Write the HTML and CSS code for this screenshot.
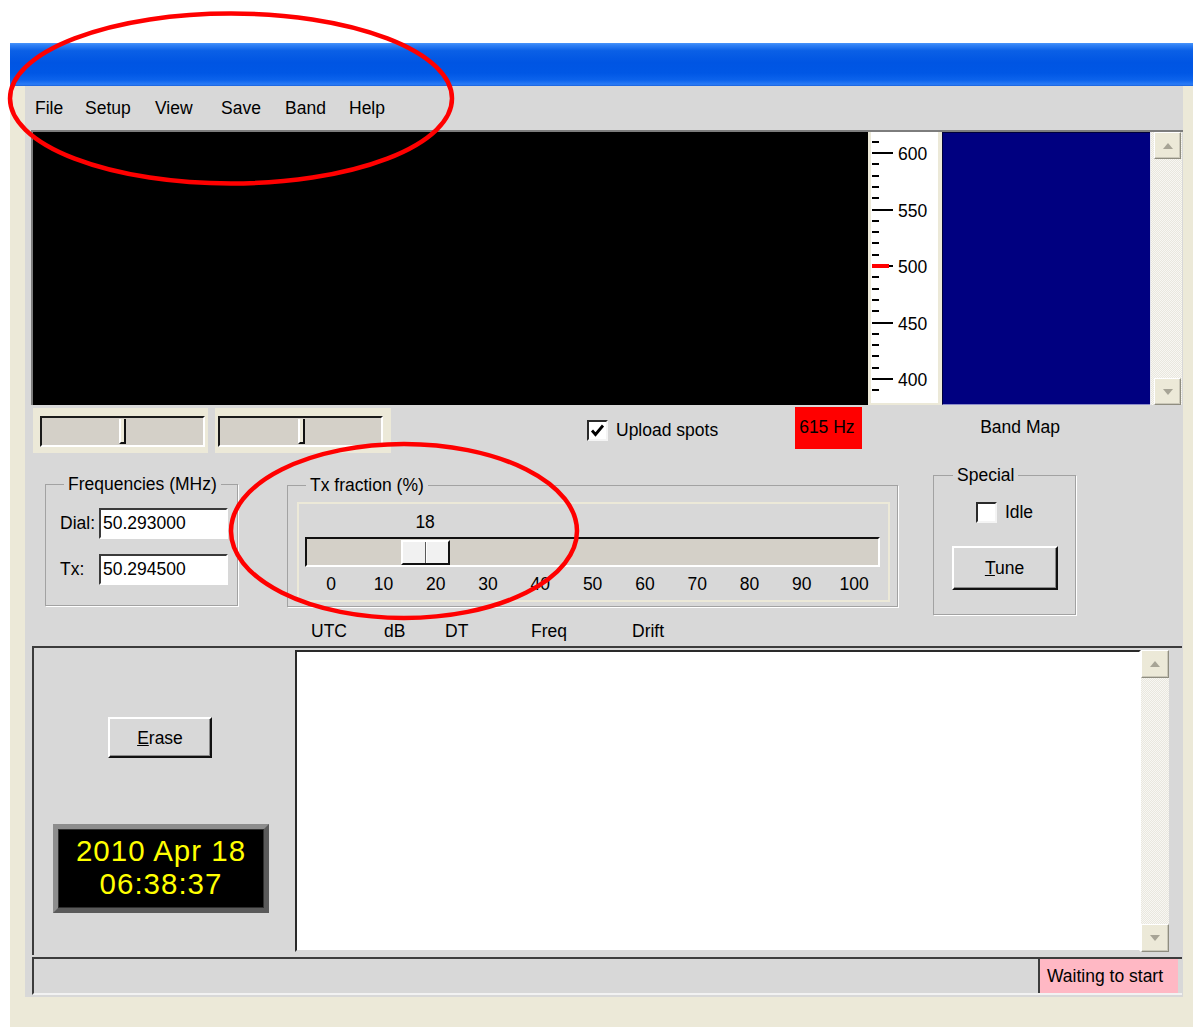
FILE: index.html
```html
<!DOCTYPE html>
<html lang="en">
<head>
<meta charset="utf-8">
<title>WSPR</title>
<link rel="stylesheet" href="styles.css">
</head>
<body>
<div class="screen">
  <div class="window">
    <div class="titlebar"></div>
    <div class="frame">
      <div class="client">

        <nav class="menubar">
          <span>File</span><span>Setup</span><span>View</span><span>Save</span><span>Band</span><span>Help</span>
        </nav>

        <section class="display">
          <div class="waterfall"></div>
          <svg class="ruler" width="74" height="273" viewBox="0 0 74 273">
            <rect width="74" height="273" fill="#ece9d8"/>
            <rect x="3" y="0" width="67" height="271" fill="#fff"/>
            <path d="M4 10h7M4 32h7M4 44h7M4 55h7M4 66h7M4 89h7M4 100h7M4 111h7M4 123h7M4 145h7M4 157h7M4 168h7M4 179h7M4 202h7M4 213h7M4 224h7M4 236h7M4 258h7" stroke="#000" stroke-width="2"/>
            <path d="M4 21h21M4 78h21M4 191h21M4 247h21M21 134h4" stroke="#000" stroke-width="2"/>
            <path d="M4 134h17" stroke="#f00" stroke-width="4"/>
            <g class="ruler-labels">
              <text x="30" y="27.5">600</text>
              <text x="30" y="84.5">550</text>
              <text x="30" y="140.5">500</text>
              <text x="30" y="197.5">450</text>
              <text x="30" y="253.5">400</text>
            </g>
          </svg>
          <div class="bandmap"></div>
          <div class="vscroll">
            <div class="sbtn"><svg width="10" height="6" viewBox="0 0 10 6"><path d="M0 6L5 0L10 6Z" fill="#a7a496"/></svg></div>
            <div class="track"></div>
            <div class="sbtn"><svg width="10" height="6" viewBox="0 0 10 6"><path d="M0 0L5 6L10 0Z" fill="#a7a496"/></svg></div>
          </div>
        </section>

        <section class="controls">
          <div class="mini-slider first">
            <div class="mini-track"><span class="mini-thumb" style="left: 77px"></span></div>
          </div>
          <div class="mini-slider second">
            <div class="mini-track"><span class="mini-thumb" style="left: 78px"></span></div>
          </div>
          <div class="check upload">
            <span class="box"><svg width="17" height="17" viewBox="0 0 17 17"><path d="M3 8.5L6.5 12.5L14 3.5" fill="none" stroke="#000" stroke-width="2.8"/></svg></span>
            <span>Upload spots</span>
          </div>
          <div class="hz">615 Hz</div>
          <div class="bandmap-label">Band Map</div>
        </section>

        <section class="groups">
          <fieldset class="group freq">
            <legend>Frequencies (MHz)</legend>
            <div class="freq-body">
              <span class="lbl">Dial:</span><span class="field">50.293000</span>
              <span class="lbl">Tx:</span><span class="field">50.294500</span>
            </div>
          </fieldset>

          <fieldset class="group txfrac">
            <legend>Tx fraction (%)</legend>
            <div class="slider-panel" style="--v: 18">
              <div class="slider-value">18</div>
              <div class="slider-track"><span class="slider-thumb"></span></div>
              <div class="slider-scale">
                <span>0</span><span>10</span><span>20</span><span>30</span><span>40</span><span>50</span><span>60</span><span>70</span><span>80</span><span>90</span><span>100</span>
              </div>
            </div>
          </fieldset>

          <fieldset class="group special">
            <legend>Special</legend>
            <div class="special-body">
              <div class="check idle">
                <span class="box"></span>
                <span>Idle</span>
              </div>
              <button class="btn tune" type="button"><u>T</u>une</button>
            </div>
          </fieldset>
        </section>

        <div class="headers">
          <span>UTC</span><span>dB</span><span>DT</span><span>Freq</span><span>Drift</span>
        </div>

        <section class="decodes">
          <div class="left-pane">
            <button class="btn erase" type="button"><u>E</u>rase</button>
            <div class="clock">2010 Apr 18<br>06:38:37</div>
          </div>
          <div class="textbox"></div>
          <div class="vscroll small">
            <div class="sbtn"><svg width="10" height="6" viewBox="0 0 10 6"><path d="M0 6L5 0L10 6Z" fill="#a7a496"/></svg></div>
            <div class="track"></div>
            <div class="sbtn"><svg width="10" height="6" viewBox="0 0 10 6"><path d="M0 0L5 6L10 0Z" fill="#a7a496"/></svg></div>
          </div>
        </section>

        <footer class="statusbar">
          <div class="status-msg">Waiting to start</div>
        </footer>

      </div>
    </div>
  </div>
</div>

<!-- hand-drawn highlight rings over the menu bar and the Tx fraction slider -->
<svg class="marks" width="1193" height="1027" viewBox="0 0 1193 1027">
  <ellipse cx="231" cy="98.5" rx="221" ry="85" fill="none" stroke="#f00" stroke-width="4.5"/>
  <ellipse cx="404" cy="531" rx="173" ry="87" fill="none" stroke="#f00" stroke-width="4.5"/>
</svg>
</body>
</html>
```

FILE: styles.css
```css
* {
  box-sizing: border-box;
}

html,
body {
  margin: 0;
}

body {
  position: relative;
  width: 1193px;
  height: 1027px;
  overflow: hidden;
  background: #fff;
  font-family: "Liberation Sans", Arial, sans-serif;
  font-size: 17.5px;
  color: #000;
}

.screen {
  padding: 43px 0 0 10px;
}

/* annotation layer drawn over the window */
.marks {
  position: absolute;
  top: 0;
  left: 0;
  pointer-events: none;
}

/* XP-style window chrome */
.window {
  width: 1183px;
  height: 984px;
  background: #ece9d8;
  display: flex;
  flex-direction: column;
}

.titlebar {
  height: 43px;
  background: linear-gradient(to bottom,
    #4a95fa 0,
    #2f80f5 5%,
    #0b60e6 18%,
    #0055e3 45%,
    #0057e5 70%,
    #0c63ec 86%,
    #2a7bf6 96%,
    #1b63dc 100%);
}

.frame {
  padding: 0 10px 30px 15px;
}

.client {
  height: 911px;
  background: #d8d8d8;
  padding-left: 6px;
  display: flex;
  flex-direction: column;
}

/* menu */
.menubar {
  height: 44px;
  display: grid;
  grid-template-columns: 50px 70px 66px 64px 64px auto;
  align-items: center;
  padding-left: 4px;
}

/* waterfall + frequency scale + band map */
.display {
  display: flex;
  height: 275px;
  border-top: 2px solid #7d7d7d;
}

.waterfall {
  width: 837px;
  background: #000;
  border-left: 2px solid #7d7d7d;
}

.ruler {
  display: block;
  flex: none;
}

.ruler-labels {
  font-family: "Liberation Sans", Arial, sans-serif;
  font-size: 17.5px;
  fill: #000;
}

.bandmap {
  width: 208px;
  background: #000080;
  border-top: 1px solid #00003a;
  border-left: 1px solid #00003a;
  border-bottom: 1px solid #8c8cc8;
}

.vscroll {
  width: 32px;
  display: flex;
  flex-direction: column;
  padding: 0 1px 0 3px;
  background-color: #f3f2ec;
  background-image: repeating-conic-gradient(#f8f7f3 0 25%, #e9e7de 0 50%);
  background-size: 2px 2px;
  border-left: 1px solid #e4e4ee;
}

.vscroll .track {
  flex: 1;
}

.sbtn {
  height: 27px;
  flex: none;
  display: flex;
  align-items: center;
  justify-content: center;
  background: #ece9d8;
  border: 1px solid;
  border-color: #fff #8f8d80 #8f8d80 #fff;
  box-shadow: inset -1px -1px 0 #cbc8b9;
}

/* row under the display */
.controls {
  height: 50px;
  display: flex;
  align-items: flex-start;
}

.mini-slider {
  margin-top: 3px;
  height: 45px;
  background: #ece9d8;
}

.mini-slider.first {
  margin-left: 2px;
  width: 175px;
  padding: 8px 3px 6px 7px;
}

.mini-slider.second {
  margin-left: 7px;
  width: 176px;
  padding: 8px 8px 6px 3px;
}

.mini-track {
  position: relative;
  height: 31px;
  background: #d4d0c8;
  border: 2px solid;
  border-color: #1a1a1a #fff #fff #1a1a1a;
}

.mini-thumb {
  position: absolute;
  top: 1px;
  width: 7px;
  height: 25px;
  background: #ece9d8;
  border-left: 2px solid #fff;
  border-right: 2px solid #111;
  border-bottom: 2px solid #111;
}

.check {
  display: flex;
  align-items: center;
  gap: 8px;
  line-height: 22px;
}

.box {
  width: 21px;
  height: 21px;
  flex: none;
  display: flex;
  align-items: center;
  justify-content: center;
  background: #fff;
  border: 2px solid;
  border-color: #2a2a2a #f4f4f4 #f4f4f4 #2a2a2a;
}

.check.upload {
  margin-left: 196px;
  margin-top: 14px;
}

.hz {
  margin-left: 77px;
  margin-top: 2px;
  width: 67px;
  height: 42px;
  padding: 10px 0 0 4px;
  line-height: 20px;
  background: #ff0000;
}

.bandmap-label {
  margin-left: 118px;
  margin-top: 12px;
  line-height: 20px;
}

/* group boxes */
.groups {
  height: 162px;
  display: flex;
  align-items: flex-start;
}

.group {
  margin: 0;
  padding: 0;
  min-inline-size: 0;
  border: 1px solid #a2a2a2;
  box-shadow: 1px 1px 0 #fff;
}

.group legend {
  padding: 0 4px;
  line-height: 20px;
  margin-left: 18px;
}

.freq {
  margin-left: 14px;
  margin-top: 19px;
  width: 193px;
}

.freq-body {
  display: grid;
  grid-template-columns: 39px 129px;
  row-gap: 15px;
  align-items: center;
  padding: 14px 9px 20px 14px;
}

.field {
  height: 31px;
  line-height: 27px;
  padding-left: 2px;
  background: #fff;
  border: 2px solid;
  border-color: #3a3a3a #fff #fff #3a3a3a;
}

.txfrac {
  margin-left: 49px;
  margin-top: 20px;
  width: 611px;
}

.slider-panel {
  margin: 7px 7px 4px 9px;
  height: 100px;
  padding: 8px 8px 0 6px;
  background: #d8d8d8;
  border: 2px solid #ece9d8;
}

.slider-value {
  width: 40px;
  text-align: center;
  line-height: 20px;
  margin-left: calc(var(--v) * 5.23px + 6px);
}

.slider-track {
  position: relative;
  margin-top: 5px;
  height: 30px;
  background: #d4d0c8;
  border: 2px solid;
  border-color: #111 #fff #fff #111;
}

.slider-thumb {
  position: absolute;
  top: 1px;
  left: calc(var(--v) * 5.23px);
  width: 49px;
  height: 25px;
  background: linear-gradient(to right, transparent 22px, #5a5a5a 22px, #5a5a5a 23px, #fff 23px, #fff 24px, transparent 24px), #f1f1f1;
  border: 2px solid;
  border-color: #fff #111 #111 #fff;
}

.slider-scale {
  margin-top: 7px;
  display: grid;
  grid-template-columns: repeat(11, 52.3px);
  line-height: 20px;
  text-align: center;
}

.special {
  margin-left: 35px;
  margin-top: 10px;
  width: 143px;
}

.special legend {
  margin-left: 19px;
}

.special-body {
  display: flex;
  flex-direction: column;
  align-items: center;
  padding: 17px 0 24px;
}

.check.idle {
  line-height: 21px;
  gap: 8px;
}

/* classic push buttons */
.btn {
  font: inherit;
  color: #000;
  padding: 0;
  background: #d8d8d8;
  border: 2px solid;
  border-color: #fff #111 #111 #fff;
  box-shadow: inset -1px -1px 0 #8a8a8a;
  line-height: 20px;
}

.btn.tune {
  margin-top: 23px;
  width: 106px;
  height: 44px;
}

/* column headings */
.headers {
  height: 29px;
  display: grid;
  grid-template-columns: 73px 61px 86px 101px auto;
  align-items: center;
  padding-left: 280px;
}

/* decoded list area */
.decodes {
  margin-left: 1px;
  width: 1150px;
  height: 309px;
  display: flex;
  padding: 2px 0 3px;
  border-top: 2px solid #3c3c3c;
  border-left: 2px solid #3c3c3c;
}

.left-pane {
  width: 261px;
  flex: none;
  display: flex;
  flex-direction: column;
  align-items: flex-start;
}

.btn.erase {
  margin: 67px 0 0 74px;
  width: 104px;
  height: 41px;
}

.clock {
  margin: 66px 0 0 19px;
  width: 216px;
  height: 89px;
  padding-top: 5px;
  background: #000;
  border: 5px solid #6f6f6f;
  border-color: #8d8d8d #5a5a5a #5a5a5a #8d8d8d;
  box-shadow: inset 0 0 0 1px #2e2e2e;
  color: #ffff00;
  font-size: 29.5px;
  letter-spacing: 1px;
  line-height: 33px;
  text-align: center;
}

.textbox {
  width: 846px;
  flex: none;
  background: #fff;
  border: 2px solid;
  border-color: #2a2a2a #fff #d8d8d8 #2a2a2a;
}

.vscroll.small {
  width: 28px;
  padding: 0;
  border-left: 0;
}

.vscroll.small .sbtn {
  height: 28px;
}

/* status bar */
.statusbar {
  margin: 2px 0 0 1px;
  width: 1150px;
  height: 38px;
  display: flex;
  justify-content: flex-end;
  padding-right: 4px;
  border-top: 2px solid #3c3c3c;
  border-left: 2px solid #3c3c3c;
  border-bottom: 2px solid #f2f2f2;
}

.status-msg {
  width: 140px;
  padding-left: 7px;
  line-height: 34px;
  background: #ffb8c4;
  border-left: 2px solid #3c3c3c;
}
```
